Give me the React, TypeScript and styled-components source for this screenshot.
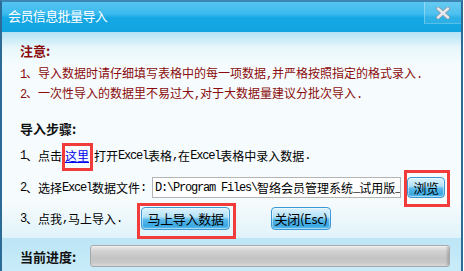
import React from "react";
import styled, { createGlobalStyle } from "styled-components";

const Global = createGlobalStyle`
  html, body { margin: 0; padding: 0; background: #ffffff; overflow: hidden; }
  #root { width: 464px; height: 271px; }
`;

const FONT = `"Liberation Mono", "Noto Sans CJK SC", monospace`;
const CJK = `"Noto Sans CJK SC", "Liberation Sans", sans-serif`;

const Window = styled.div`
  width: 463px;
  height: 271px;
  box-sizing: border-box;
  border-left: 2px solid #2c6b95;
  border-right: 2px solid #2c6b95;
  border-top: 2px solid #3d86b3;
  display: flex;
  flex-direction: column;
  overflow: hidden;
`;

const TitleBar = styled.div`
  height: 30px;
  flex: none;
  display: flex;
  align-items: flex-start;
  justify-content: space-between;
  background: linear-gradient(#55c5f1 0%, #3bbaee 40%, #16a8e4 52%, #10a4e1 100%);
`;

const Title = styled.div`
  font-family: ${CJK};
  font-size: 13px;
  color: #ffffff;
  line-height: 16px;
  margin: 6px 0 0 6px;
  letter-spacing: -0.6px;
`;

const CloseBtn = styled.div`
  width: 36px;
  height: 21px;
  display: flex;
  align-items: center;
  justify-content: center;
  background: rgba(255, 255, 255, 0.1);
  border-left: 1px solid rgba(255, 255, 255, 0.3);
  border-bottom: 1px solid rgba(255, 255, 255, 0.2);
`;

const Body = styled.div`
  height: 206px;
  flex: none;
  box-sizing: border-box;
  padding: 9px 0 0 18px;
  background: linear-gradient(#b3e2f4 0px, #e8f7fb 16px, #f6fcfe 34px, #f6fbfd 170px, #e0f3fa 206px);
  font-family: ${FONT};
  font-size: 12px;
  color: #000;
`;

const Heading = styled.div<{ $red?: boolean }>`
  font-family: ${CJK};
  font-weight: bold;
  font-size: 13px;
  line-height: 20px;
  height: 20px;
  color: ${(p) => (p.$red ? "#8a0b0b" : "#111")};
`;

const NoteLine = styled.div<{ $top: number }>`
  line-height: 20px;
  height: 20px;
  color: #8a0b0b;
  margin-top: ${(p) => p.$top}px;
  white-space: nowrap;
`;

const Half = styled.span`
  letter-spacing: -1.2px;
`;

const StepRow = styled.div<{ $top: number; $h: number }>`
  display: flex;
  align-items: center;
  height: ${(p) => p.$h}px;
  margin-top: ${(p) => p.$top}px;
  white-space: nowrap;
`;

const Marked = styled.span<{ $t: number; $r: number; $b: number; $l: number; $ml: number; $mr: number }>`
  position: relative;
  display: inline-flex;
  margin-left: ${(p) => p.$ml}px;
  margin-right: ${(p) => p.$mr}px;
  &::after {
    content: "";
    position: absolute;
    top: -${(p) => p.$t}px;
    right: -${(p) => p.$r}px;
    bottom: -${(p) => p.$b}px;
    left: -${(p) => p.$l}px;
    border: 3px solid #f23b3b;
    pointer-events: none;
  }
`;

const Link = styled.a`
  color: #0000f0;
  text-decoration: underline;
  font-family: ${CJK};
  line-height: 20px;
  cursor: pointer;
`;

const PathInput = styled.div`
  width: 249px;
  height: 21px;
  box-sizing: border-box;
  margin-left: 6px;
  border: 1px solid #b4b4b4;
  background: #fff;
  padding-left: 2px;
  display: flex;
  align-items: center;
  font-size: 12px;
  overflow: hidden;
`;

const Btn = styled.button<{ $w: number; $h: number }>`
  width: ${(p) => p.$w}px;
  height: ${(p) => p.$h}px;
  box-sizing: border-box;
  padding: 0;
  border: 1px solid #3a98d4;
  border-radius: 4px;
  background: linear-gradient(#dcf3fd 0%, #b3e2f8 42%, #58b8ea 56%, #3aa7e2 85%, #62bfee 100%);
  box-shadow: inset 0 0 0 1px rgba(255, 255, 255, 0.45);
  font-family: ${FONT};
  font-size: 12px;
  color: #000;
  display: flex;
  align-items: center;
  justify-content: center;
`;

const BtnText = styled.span`
  font-family: ${CJK};
  font-size: 13px;
  letter-spacing: -0.3px;
`;

const ProgressSection = styled.div`
  flex: 1;
  display: flex;
  align-items: flex-start;
  padding: 7px 0 0 18px;
  background: linear-gradient(#bce5f6, #c9ecf9);
`;

const ProgressLabel = styled(Heading)`
  width: 70px;
  margin-top: 2px;
`;

const ProgressBar = styled.div`
  width: 360px;
  height: 22px;
  box-sizing: border-box;
  border: 1px solid #a9a9a9;
  border-radius: 3px;
  background: linear-gradient(#ececec 0%, #d2d2d2 25%, #c4c4c4 60%, #c9c9c9 85%, #e2e2e2 100%);
  box-shadow: inset -2px 0 2px rgba(0, 0, 0, 0.15), inset 0 1px 0 rgba(255, 255, 255, 0.8);
`;

const CloseIcon = () => (
  <svg width="16" height="12" viewBox="0 0 16 12">
    <path d="M3 1.5 L13 10.5 M13 1.5 L3 10.5" stroke="#8a9aa6" strokeWidth="4" strokeLinecap="round" />
    <path d="M3 1.5 L13 10.5 M13 1.5 L3 10.5" stroke="#e6eaee" strokeWidth="2.4" strokeLinecap="round" />
  </svg>
);

export default function App() {
  return (
    <>
      <Global />
      <Window>
        <TitleBar>
          <Title>会员信息批量导入</Title>
          <CloseBtn>
            <CloseIcon />
          </CloseBtn>
        </TitleBar>
        <Body>
          <Heading $red>注意:</Heading>
          <NoteLine $top={4}>
            <Half>1</Half>、导入数据时请仔细填写表格中的每一项数据<Half>,</Half>并严格按照指定的格式录入<Half>.</Half>
          </NoteLine>
          <NoteLine $top={0}>
            <Half>2</Half>、一次性导入的数据里不易过大<Half>,</Half>对于大数据量建议分批次导入<Half>.</Half>
          </NoteLine>
          <Heading style={{ marginTop: 14 }}>导入步骤:</Heading>
          <StepRow $top={7} $h={20}>
            <Half>1</Half>、点击
            <Marked $t={3} $r={4} $b={5} $l={3} $ml={3} $mr={5}>
              <Link>这里</Link>
            </Marked>
            打开<Half>Excel</Half>表格<Half>,</Half>在<Half>Excel</Half>表格中录入数据<Half>.</Half>
          </StepRow>
          <StepRow $top={11} $h={21}>
            <Half>2</Half>、选择<Half>Excel</Half>数据文件<Half>:</Half>
            <PathInput>
              <Half>D:\Program Files\</Half>智络会员管理系统<Half>_</Half>试用版<Half>_</Half>
            </PathInput>
            <Marked $t={7} $r={5} $b={9} $l={3} $ml={6} $mr={0}>
              <Btn $w={38} $h={21}>
                <BtnText>浏览</BtnText>
              </Btn>
            </Marked>
          </StepRow>
          <StepRow $top={9} $h={23}>
            <Half>3</Half>、点我<Half>,</Half>马上导入<Half>.</Half>
            <Marked $t={4} $r={6} $b={9} $l={4} $ml={19} $mr={41}>
              <Btn $w={89} $h={23}>
                <BtnText>马上导入数据</BtnText>
              </Btn>
            </Marked>
            <Btn $w={60} $h={23}>
              <BtnText>关闭(Esc)</BtnText>
            </Btn>
          </StepRow>
        </Body>
        <ProgressSection>
          <ProgressLabel>当前进度:</ProgressLabel>
          <ProgressBar />
        </ProgressSection>
      </Window>
    </>
  );
}
